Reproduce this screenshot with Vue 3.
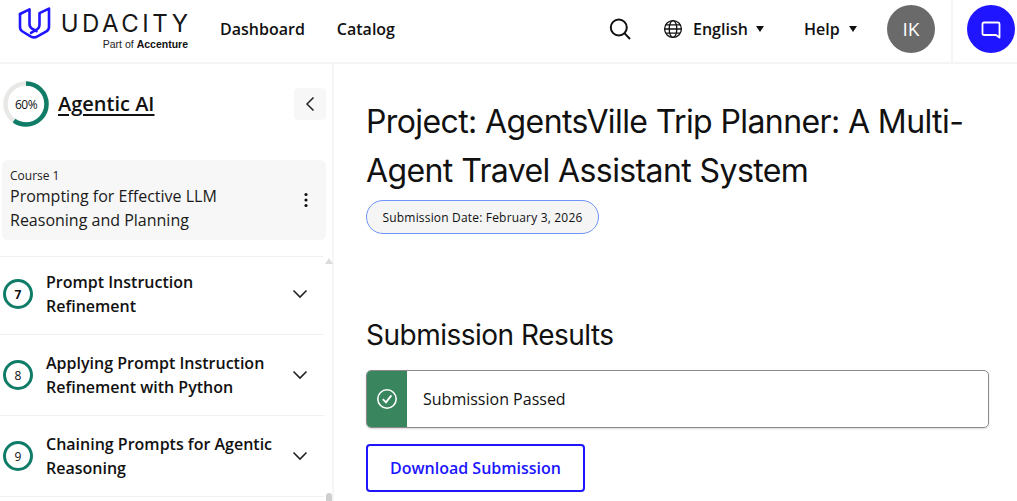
<template>
  <div class="page">
    <header class="top">
      <div class="brand">
        <svg class="logo" width="34" height="34" viewBox="0 0 34 34" fill="none" stroke="#2015ff" stroke-width="2.6" stroke-linejoin="round" stroke-linecap="round">
          <path d="M2 8 L11.5 3.4 V18 Q11.5 21 14 22.6 L18.5 25.2" />
          <path d="M2 8 V21 Q2 24 4.5 25.5 L13 30.6 Q16 32.2 19 30.6 L28 25.6 Q31 24 31 21 V2.6 L21.5 7.2 V19 Q21.5 21.5 19.5 23 L13 26.8" />
        </svg>
        <div class="wordmark">
          <span class="udacity">UDACITY</span>
          <span class="part">Part of <b>Accenture</b></span>
        </div>
      </div>
      <nav class="nav">
        <a>Dashboard</a>
        <a>Catalog</a>
      </nav>
      <div class="tools">
        <svg class="search" width="24" height="24" viewBox="0 0 24 24" fill="none" stroke="#111" stroke-width="2">
          <circle cx="10.8" cy="10.5" r="8" />
          <path d="M16.6 16.4 L22 22" />
        </svg>
        <div class="lang">
          <svg width="20" height="20" viewBox="0 0 20 20" fill="none" stroke="#111" stroke-width="1.3">
            <circle cx="10" cy="10" r="8.4" />
            <ellipse cx="10" cy="10" rx="3.8" ry="8.4" />
            <path d="M1.6 10 H18.4 M2.8 5.8 H17.2 M2.8 14.2 H17.2" />
          </svg>
          <span>English</span>
          <i class="caret"></i>
        </div>
        <div class="help">
          <span>Help</span>
          <i class="caret"></i>
        </div>
        <div class="avatar">IK</div>
        <div class="chatwrap">
          <div class="chat">
            <svg width="22" height="22" viewBox="0 0 22 22" fill="none" stroke="#fff" stroke-width="1.8" stroke-linejoin="round">
              <path d="M4 4.5 H18 Q19.5 4.5 19.5 6 V19.5 L16 17 H4 Q2.5 17 2.5 15.5 V6 Q2.5 4.5 4 4.5 Z" />
            </svg>
          </div>
        </div>
      </div>
    </header>
    <div class="body">
      <aside class="side">
        <div class="progress">
          <div class="ring-wrap">
            <svg width="46" height="46" viewBox="0 0 46 46" fill="none" stroke-width="4.5">
              <circle cx="23" cy="23" r="20.5" stroke="#e8e8e6" />
              <circle cx="23" cy="23" r="20.5" stroke="#0f7c68" pathLength="100" stroke-dasharray="60 40" transform="rotate(-90 23 23)" />
            </svg>
            <span class="pct">60%</span>
          </div>
          <a class="prog-title">Agentic AI</a>
          <button class="collapse">
            <svg width="12" height="16" viewBox="0 0 12 16" fill="none" stroke="#222" stroke-width="1.5">
              <path d="M9.5 1.5 L3 8 L9.5 14.5" />
            </svg>
          </button>
        </div>
        <div class="course">
          <div class="course-text">
            <div class="course-no">Course 1</div>
            <div class="course-name">Prompting for Effective LLM Reasoning and Planning</div>
          </div>
          <svg class="dots" width="4" height="16" viewBox="0 0 4 16" fill="#111">
            <circle cx="2" cy="2.5" r="1.6" />
            <circle cx="2" cy="8" r="1.6" />
            <circle cx="2" cy="13.5" r="1.6" />
          </svg>
        </div>
        <div class="lessons">
          <div class="scrollbar">
            <i class="up"></i>
            <i class="thumb"></i>
          </div>
          <div v-for="l in lessons" :key="l.n" class="lesson">
            <span class="num" :class="{ heavy: l.n === 7 }">{{ l.n }}</span>
            <span class="lesson-name">{{ l.t }}</span>
            <svg class="chev" width="16" height="10" viewBox="0 0 16 10" fill="none" stroke="#222" stroke-width="1.6">
              <path d="M1.5 1.5 L8 8 L14.5 1.5" />
            </svg>
          </div>
        </div>
      </aside>
      <main class="main">
        <h1>Project: AgentsVille Trip Planner: A Multi-Agent Travel Assistant System</h1>
        <div class="date">Submission Date: February 3, 2026</div>
        <h2>Submission Results</h2>
        <div class="result">
          <div class="ok">
            <svg width="22" height="22" viewBox="0 0 22 22" fill="none" stroke="#fff" stroke-width="1.6">
              <circle cx="11" cy="11" r="9.2" />
              <path d="M6.8 11.2 L10 14.4 L15.4 7.4" stroke-width="1.8" />
            </svg>
          </div>
          <span>Submission Passed</span>
        </div>
        <button class="download">Download Submission</button>
      </main>
    </div>
  </div>
</template>

<script setup>
const lessons = [
  { n: 7, t: 'Prompt Instruction Refinement' },
  { n: 8, t: 'Applying Prompt Instruction Refinement with Python' },
  { n: 9, t: 'Chaining Prompts for Agentic Reasoning' },
]
</script>

<style>
html, body { margin: 0; height: 100%; overflow: hidden; background: #fff; }
</style>

<style scoped>
* { box-sizing: border-box; }
.page { width: 1017px; height: 501px; overflow: hidden; font-family: "Open Sans", sans-serif; color: #111; background: #fff; }
.top { height: 64px; display: flex; align-items: flex-start; border-bottom: 2px solid #f5f5f5; }
.brand { display: flex; margin-left: 18px; margin-top: 6px; gap: 12px; width: 170px; flex: none; }
.logo { flex: none; }
.wordmark { display: flex; flex-direction: column; align-items: flex-end; width: 124px; flex: none; }
.udacity { font-family: Inter, sans-serif; font-size: 24px; line-height: 24px; margin-top: 6px; letter-spacing: 3.5px; margin-right: -3.5px; color: #171717; font-weight: 400; }
.part { font-family: "Liberation Sans", sans-serif; font-size: 10.5px; line-height: 12px; margin-top: 2px; color: #222; }
.part b { color: #111; }
.nav { display: flex; gap: 32px; margin-left: 32px; font-size: 16px; font-weight: 600; height: 58px; align-items: center; flex: none; }
.tools { margin-left: auto; display: flex; align-items: center; height: 58px; font-size: 16px; font-weight: 600; }
.search { margin-right: 31px; }
.lang { display: flex; align-items: center; gap: 10px; width: 141px; }
.caret { display: inline-block; width: 0; height: 0; border-left: 4px solid transparent; border-right: 4px solid transparent; border-top: 6px solid #111; }
.lang .caret { margin-left: -2px; }
.help { display: flex; align-items: center; gap: 9px; width: 83px; }
.avatar { width: 48px; height: 48px; border-radius: 50%; background: #6a6a6a; color: #fff; display: flex; align-items: center; justify-content: center; font-size: 19px; font-weight: 400; }
.chatwrap { margin-left: 16px; width: 66px; height: 62px; align-self: flex-start; border-left: 2px solid #f5f5f5; padding: 5px 0 0 14px; }
.chat { width: 48px; height: 48px; flex: none; border-radius: 50%; background: #2015ff; display: flex; align-items: center; justify-content: center; }
.body { display: flex; height: 437px; }
.side { width: 334px; flex: none; border-right: 2px solid #f5f5f5; padding: 17px 6px 0 0; }
.progress { display: flex; align-items: center; height: 46px; padding-left: 3px; }
.ring-wrap { position: relative; width: 46px; height: 46px; flex: none; }
.ring-wrap svg { display: block; }
.pct { position: absolute; inset: 0; display: flex; align-items: center; justify-content: center; font-size: 12px; letter-spacing: -0.5px; font-weight: 400; }
.prog-title { margin-left: 9px; margin-top: -2px; font-size: 20px; font-weight: 600; text-decoration: underline; text-underline-offset: 3px; text-decoration-thickness: 2px; }
.collapse { margin-left: auto; width: 32px; height: 32px; background: #f7f7f7; border: 0; border-radius: 4px; display: flex; align-items: center; justify-content: center; padding: 0; }
.course { margin: 33px 0 0 2px; height: 80px; background: #f7f7f7; border-radius: 6px; display: flex; align-items: center; padding: 0 18px 0 8px; }
.course-text { flex: 1; }
.course-no { font-size: 12px; line-height: 16px; color: #222; }
.course-name { font-size: 16px; line-height: 24px; width: 240px; color: #1a1a1a; }
.lessons { position: relative; margin: 16px 2px 0 0; }
.scrollbar { position: absolute; left: 325px; top: 0; height: 240px; width: 8px; }
.up { position: absolute; top: 2px; left: 0; border-left: 4px solid transparent; border-right: 4px solid transparent; border-bottom: 6px solid #dcdcdc; }
.thumb { position: absolute; top: 237px; left: 1px; width: 6px; height: 12px; background: #cfcfcf; border-radius: 3px; }
.lesson { display: flex; align-items: center; height: 81px; border-top: 1px solid #f1f1f1; padding-left: 3px; }
.lesson:nth-child(2) { height: 78px; padding-bottom: 3px; }
.lesson:last-child { height: 82px; border-bottom: 1px solid #f1f1f1; }
.num { width: 30px; height: 30px; border: 3px solid #0f7c68; border-radius: 50%; display: flex; align-items: center; justify-content: center; font-size: 12px; flex: none; font-weight: 500; }
.num.heavy { font-weight: 700; }
.lesson-name { margin-left: 13px; width: 232px; font-size: 16px; line-height: 24px; font-weight: 600; }
.chev { margin-left: 14px; flex: none; }
.main { flex: 1; padding: 33px 28px 0 32px; }
h1 { margin: 0; font-family: Inter, sans-serif; font-size: 32px; line-height: 49px; font-weight: 400; color: #111; letter-spacing: -0.6px; }
.date { margin-top: 5px; width: 233px; height: 34px; border: 1px solid #6d95f5; border-radius: 17px; background: #f5f5f5; display: flex; align-items: center; justify-content: center; font-size: 12px; font-weight: 500; letter-spacing: 0.18px; }
h2 { margin: 83px 0 0; font-family: Inter, sans-serif; font-size: 28px; line-height: 36px; font-weight: 400; letter-spacing: -0.5px; }
.result { margin-top: 17px; height: 58px; border: 1px solid #8a8a8a; border-radius: 5px; display: flex; align-items: center; overflow: hidden; box-shadow: 0 1px 2px rgba(0,0,0,.15); font-size: 16px; }
.ok { width: 40px; height: 100%; background: #38855e; display: flex; align-items: center; justify-content: center; margin-right: 16px; flex: none; }
.download { display: block; margin-top: 16px; width: 219px; height: 48px; border: 2px solid #2015ff; border-radius: 4px; background: #fff; color: #2015ff; font-family: "Open Sans", sans-serif; font-size: 16px; font-weight: 600; padding: 0; }
</style>
